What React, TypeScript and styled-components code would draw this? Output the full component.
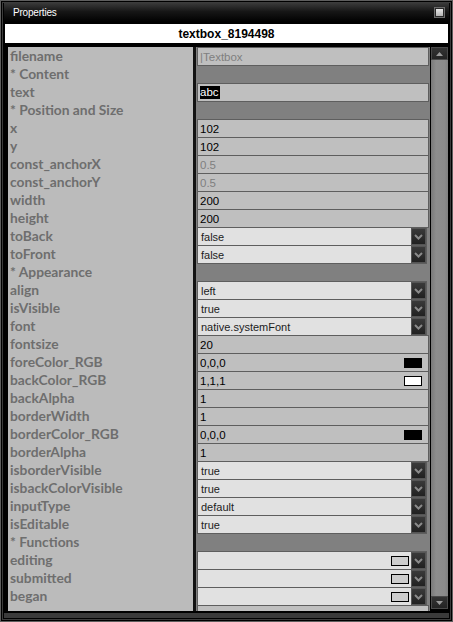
import React from 'react';
import styled, { createGlobalStyle } from 'styled-components';

const GlobalStyle = createGlobalStyle`
  html, body {
    margin: 0;
    padding: 0;
    background: #000;
  }
`;

type RowKind = 'text' | 'disabled' | 'selected' | 'section' | 'select' | 'color' | 'func';

interface PropRow {
  label: string;
  kind: RowKind;
  value?: string;
  swatch?: string;
}

const rows: PropRow[] = [
  { label: 'filename', kind: 'disabled', value: '|Textbox' },
  { label: '* Content', kind: 'section' },
  { label: 'text', kind: 'selected', value: 'abc' },
  { label: '* Position and Size', kind: 'section' },
  { label: 'x', kind: 'text', value: '102' },
  { label: 'y', kind: 'text', value: '102' },
  { label: 'const_anchorX', kind: 'disabled', value: '0.5' },
  { label: 'const_anchorY', kind: 'disabled', value: '0.5' },
  { label: 'width', kind: 'text', value: '200' },
  { label: 'height', kind: 'text', value: '200' },
  { label: 'toBack', kind: 'select', value: 'false' },
  { label: 'toFront', kind: 'select', value: 'false' },
  { label: '* Appearance', kind: 'section' },
  { label: 'align', kind: 'select', value: 'left' },
  { label: 'isVisible', kind: 'select', value: 'true' },
  { label: 'font', kind: 'select', value: 'native.systemFont' },
  { label: 'fontsize', kind: 'text', value: '20' },
  { label: 'foreColor_RGB', kind: 'color', value: '0,0,0', swatch: '#000' },
  { label: 'backColor_RGB', kind: 'color', value: '1,1,1', swatch: '#fff' },
  { label: 'backAlpha', kind: 'text', value: '1' },
  { label: 'borderWidth', kind: 'text', value: '1' },
  { label: 'borderColor_RGB', kind: 'color', value: '0,0,0', swatch: '#000' },
  { label: 'borderAlpha', kind: 'text', value: '1' },
  { label: 'isborderVisible', kind: 'select', value: 'true' },
  { label: 'isbackColorVisible', kind: 'select', value: 'true' },
  { label: 'inputType', kind: 'select', value: 'default' },
  { label: 'isEditable', kind: 'select', value: 'true' },
  { label: '* Functions', kind: 'section' },
  { label: 'editing', kind: 'func' },
  { label: 'submitted', kind: 'func' },
  { label: 'began', kind: 'func' },
  { label: '', kind: 'text', value: '' }
];

const Window = styled.div`
  box-sizing: border-box;
  width: 453px;
  height: 622px;
  background: #000;
  border: 1px solid #5e5e5e;
  box-shadow: inset 0 0 0 1px #000, inset 0 0 0 2px #3c3c3c;
  padding: 2px 3px 0 3px;
  display: flex;
  flex-direction: column;
  overflow: hidden;
`;

const TitleBar = styled.div`
  height: 19px;
  flex-shrink: 0;
  display: flex;
  align-items: center;
  justify-content: space-between;
  padding: 0 5px 0 9px;
  background: linear-gradient(#3a3a3a, #161616 45%, #000);
`;

const Title = styled.span`
  font-family: 'Liberation Sans', Arial, sans-serif;
  font-size: 10px;
  letter-spacing: -0.2px;
  color: #fff;
`;

const TitleButton = styled.div`
  box-sizing: border-box;
  width: 9px;
  height: 9px;
  border: 1px solid #2a2a2a;
  background: linear-gradient(#e8e8e8, #b4b4b4);
  box-shadow: 0 0 0 1px #6a6a6a;
`;

const Header = styled.div`
  height: 19px;
  flex-shrink: 0;
  margin: 2px 1px 0 1px;
  background: #fff;
  display: flex;
  align-items: center;
  justify-content: center;
  font-family: 'Liberation Sans', Arial, sans-serif;
  font-weight: bold;
  font-size: 12px;
  color: #000;
`;

const Main = styled.div`
  height: 564px;
  flex-shrink: 0;
  margin-top: 4px;
  padding-left: 4px;
  display: flex;
  gap: 1px;
`;

const PropertyList = styled.div`
  width: 422px;
  height: 564px;
  overflow: hidden;
  display: flex;
  flex-direction: column;
  background: #808080;
`;

const Row = styled.div`
  height: 18px;
  flex-shrink: 0;
  display: flex;
`;

const Label = styled.div`
  width: 188px;
  flex-shrink: 0;
  background: #bbbbbb;
  border-right: 3px solid #121212;
  padding: 0 0 2px 2px;
  box-sizing: border-box;
  display: flex;
  align-items: center;
  font-family: Lato, 'Open Sans', sans-serif;
  font-weight: bold;
  font-size: 13.8px;
  color: #6e6e6e;
  white-space: nowrap;
`;

const Value = styled.div`
  flex: 1;
  display: flex;
  align-items: flex-start;
  padding: 0 1px;
  background: #808080;
`;

const Field = styled.div<{ $dim?: boolean }>`
  position: relative;
  box-sizing: border-box;
  flex: 1;
  height: 19px;
  border: 1px solid #5e5e5e;
  background: #bfbfbf;
  display: flex;
  align-items: center;
  padding: 0 2px;
  font-family: 'Liberation Sans', Arial, sans-serif;
  font-size: 11.5px;
  color: ${({ $dim }) => ($dim ? '#808080' : '#000')};
`;

const Selection = styled.span`
  background: #000;
  color: #fff;
  line-height: 13px;
  padding-right: 1px;
`;

const Swatch = styled.span<{ $fill: string }>`
  box-sizing: border-box;
  width: 18px;
  height: 10px;
  margin-left: auto;
  margin-right: 4px;
  background: ${({ $fill }) => $fill};
  border: 1px solid #000;
`;

const SelectBox = styled.div`
  position: relative;
  box-sizing: border-box;
  flex: 1;
  height: 19px;
  margin-right: 2px;
  border: 1px solid #5e5e5e;
  background: #e1e1e1;
  display: flex;
  align-items: stretch;
  font-family: 'Liberation Sans', Arial, sans-serif;
  font-size: 11px;
  color: #1c1c1c;
`;

const SelectText = styled.span`
  flex: 1;
  display: flex;
  align-items: center;
  padding-left: 3px;
`;

const FuncSwatch = styled.span`
  align-self: center;
  box-sizing: border-box;
  width: 18px;
  height: 10px;
  margin-right: 2px;
  background: #cdcdcd;
  border: 1px solid #000;
`;

const DropButton = styled.span`
  width: 15px;
  flex-shrink: 0;
  display: flex;
  align-items: center;
  justify-content: center;
  background: linear-gradient(#3c3c3c, #1f1f1f);
  box-shadow: inset 0 0 0 1px #555;
`;

const ScrollBar = styled.div`
  width: 17px;
  height: 562px;
  display: flex;
  flex-direction: column;
`;

const ScrollButton = styled.div`
  height: 13px;
  flex-shrink: 0;
  display: flex;
  align-items: center;
  justify-content: center;
  background: linear-gradient(#353535, #222);
  box-shadow: inset 0 0 0 1px #4a4a4a;
`;

const ScrollTrack = styled.div`
  flex: 1;
  background: linear-gradient(to right, #7a7a7a, #8e8e8e 30%, #8b8b8b 80%, #808080);
`;

const Footer = styled.div`
  height: 5px;
  flex-shrink: 0;
  margin-top: 2px;
  background: #3a3a3a;
`;

const Chevron = () => (
  <svg width="9" height="6" viewBox="0 0 9 6">
    <polyline points="1,1 4.5,4.5 8,1" fill="none" stroke="#8a8a8a" strokeWidth="2" />
  </svg>
);

const Arrow: React.FC<{ down?: boolean }> = ({ down }) => (
  <svg width="7" height="4" viewBox="0 0 7 4">
    <polygon points={down ? '0,0 7,0 3.5,4' : '0,4 7,4 3.5,0'} fill="#9a9a9a" />
  </svg>
);

const renderValue = (row: PropRow) => {
  switch (row.kind) {
    case 'section':
      return null;
    case 'select':
      return (
        <SelectBox>
          <SelectText>{row.value}</SelectText>
          <DropButton>
            <Chevron />
          </DropButton>
        </SelectBox>
      );
    case 'func':
      return (
        <SelectBox>
          <SelectText />
          <FuncSwatch />
          <DropButton>
            <Chevron />
          </DropButton>
        </SelectBox>
      );
    case 'selected':
      return (
        <Field>
          <Selection>{row.value}</Selection>
        </Field>
      );
    case 'color':
      return (
        <Field>
          {row.value}
          <Swatch $fill={row.swatch || '#000'} />
        </Field>
      );
    default:
      return <Field $dim={row.kind === 'disabled'}>{row.value}</Field>;
  }
};

const App: React.FC = () => {
  return (
    <>
      <GlobalStyle />
      <Window>
        <TitleBar>
          <Title>Properties</Title>
          <TitleButton />
        </TitleBar>
        <Header>textbox_8194498</Header>
        <Main>
          <PropertyList>
            {rows.map((row, i) => (
              <Row key={i}>
                <Label>{row.label}</Label>
                <Value>{renderValue(row)}</Value>
              </Row>
            ))}
          </PropertyList>
          <ScrollBar>
            <ScrollButton>
              <Arrow />
            </ScrollButton>
            <ScrollTrack />
            <ScrollButton>
              <Arrow down />
            </ScrollButton>
          </ScrollBar>
        </Main>
        <Footer />
      </Window>
    </>
  );
};

export default App;
